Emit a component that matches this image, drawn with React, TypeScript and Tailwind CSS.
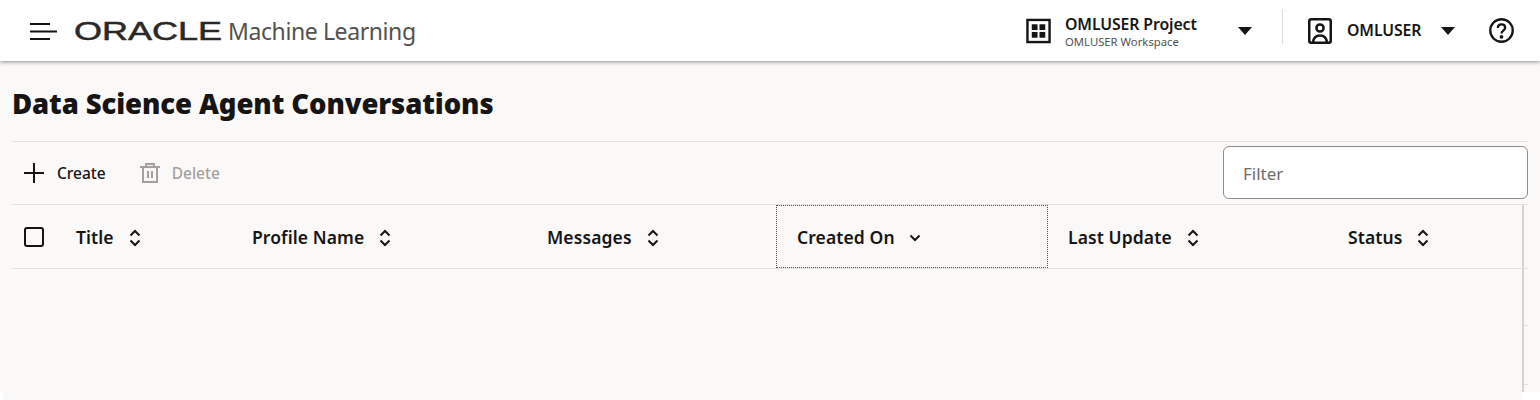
import React from 'react';

const font = { fontFamily: '"Noto Sans", "Open Sans", sans-serif' };

function SortIcon() {
  return (
    <svg width="14" height="18" viewBox="0 0 14 18" fill="none" stroke="#161513" strokeWidth="2" className="shrink-0">
      <path d="M2.5 6.5 7 2l4.5 4.5" />
      <path d="M2.5 11.5 7 16l4.5-4.5" />
    </svg>
  );
}

function DownIcon() {
  return (
    <svg width="12" height="8" viewBox="0 0 12 8" fill="none" stroke="#161513" strokeWidth="2" className="shrink-0">
      <path d="M1.5 1.5 6 6l4.5-4.5" />
    </svg>
  );
}

function Caret() {
  return (
    <svg width="16" height="10" viewBox="0 0 16 10" className="shrink-0">
      <path d="M1 1h14l-7 8z" fill="#161513" />
    </svg>
  );
}

function Header({ label, sorted, className }: { label: string; sorted?: boolean; className?: string }) {
  return (
    <div className={`flex items-center pl-5 pt-[2px] text-[17.5px] font-semibold text-[#161513] tracking-[0.1px] ${className ?? ''}`}>
      <span>{label}</span>
      <span className="ml-[14px]">{sorted ? <DownIcon /> : <SortIcon />}</span>
    </div>
  );
}

export default function App() {
  return (
    <div className="relative h-[400px] overflow-hidden bg-[#fbf9f8]" style={font}>
      {/* Top bar */}
      <div className="h-[61px] bg-white shadow-[0_1px_4px_rgba(0,0,0,0.45)] flex items-center pl-[30px] relative">
        <svg width="28" height="18" viewBox="0 0 28 18" fill="none" stroke="#161513" strokeWidth="2" className="shrink-0">
          <path d="M0 2h20M0 9.500h27M0 17h20" />
        </svg>
        <div className="w-[146px] ml-[16px] mt-[2px] shrink-0 text-[25px] leading-none font-normal text-[#2b2927] origin-left scale-x-[1.44] whitespace-nowrap [-webkit-text-stroke:0.5px_#2b2927]" style={{ fontFamily: '"Liberation Sans", sans-serif' }}>
          ORACLE
        </div>
        <div className="ml-2 mt-[2px] text-[23px] text-[#55514e] tracking-[-0.4px]">Machine Learning</div>
        <div className="ml-auto flex items-center">
          <svg width="25" height="26" viewBox="0 0 26 26" className="shrink-0">
            <rect x="1.500" y="1.500" width="23" height="23" fill="none" stroke="#161513" strokeWidth="2.500" />
            <rect x="6" y="6" width="6" height="6" fill="#161513" />
            <rect x="14" y="6" width="6" height="6" fill="#161513" />
            <rect x="6" y="14" width="6" height="6" fill="#161513" />
            <rect x="14" y="14" width="6" height="6" fill="#161513" />
          </svg>
          <div className="ml-[14px] w-[172px] leading-none mt-[3px]">
            <div className="text-[15.800px] font-semibold text-[#161513] tracking-[-0.1px]">OMLUSER Project</div>
            <div className="text-[11.300px] text-[#55514e] mt-[3px]">OMLUSER Workspace</div>
          </div>
          <Caret />
          <div className="w-px h-[35px] bg-[#dfdcd9] ml-[29px] mr-[25px] -mt-[9px]" />
          <svg width="24" height="26" viewBox="0 0 24 26" fill="none" stroke="#161513" strokeWidth="2.500" className="shrink-0">
            <rect x="1.250" y="1.250" width="21.500" height="23.500" rx="2" />
            <circle cx="12" cy="10" r="3.600" />
            <path d="M5 24.500c.5-4.500 3-7 7-7s6.500 2.500 7 7" />
          </svg>
          <div className="ml-[15px] mt-[1px] text-[15.800px] font-semibold text-[#161513] tracking-[-0.1px] w-[93px]">OMLUSER</div>
          <Caret />
          <svg width="25" height="25" viewBox="1 1 24 24" fill="none" stroke="#161513" strokeWidth="2.200" className="ml-[33px] mr-[26px] shrink-0">
            <circle cx="13" cy="13" r="10.800" />
            <path d="M9.500 10.500c0-2 1.500-3.300 3.500-3.300s3.500 1.300 3.500 3.200c0 2.800-3.500 2.700-3.500 5.400" />
            <circle cx="13" cy="19" r="0.700" fill="#161513" />
          </svg>
        </div>
      </div>

      {/* Page body */}
      <div className="mx-3">
        <div className="h-[81px] flex items-center border-b border-[#e3e0dd] pt-[6px]">
          <h1 className="text-[27.500px] font-black text-[#161513] tracking-[-0.1px]">Data Science Agent Conversations</h1>
        </div>

        {/* Toolbar */}
        <div className="h-[63px] flex items-center border-b border-[#e3e0dd] pl-3">
          <svg width="20" height="20" viewBox="0 0 20 20" stroke="#161513" strokeWidth="2" className="shrink-0">
            <path d="M10 0v20M0 10h20" />
          </svg>
          <span className="ml-[13px] pt-[2px] text-[15.500px] font-medium text-[#161513]">Create</span>
          <svg width="20" height="20" viewBox="0 0 20 20" fill="none" stroke="#a3a09d" strokeWidth="2" className="ml-[34px] shrink-0">
            <path d="M0 4h20M6 4V1h8v3M3 4v15h14V4M8 8v7M12 8v7" />
          </svg>
          <span className="ml-[12px] pt-[2px] text-[15.500px] font-medium text-[#a3a09d]">Delete</span>
          <div className="ml-auto w-[305px] h-[53px] -mt-[1px] rounded-md border border-[#8f8c89] bg-white flex items-center pl-[19px] pt-[2px] text-[17px] text-[#6f6c69]">
            Filter
          </div>
        </div>

        {/* Table head */}
        <div>
          <div className="grid grid-cols-[44px_176px_295px_249px_272px_280px_194px_6px] h-[64px] border-b border-[#e3e0dd]">
            <div className="flex items-center pl-3">
              <div className="w-5 h-5 rounded-[3px] border-2 border-[#161513] bg-[#fbf9f8]" />
            </div>
            <Header label="Title" />
            <Header label="Profile Name" />
            <Header label="Messages" />
            <Header label="Created On" sorted className="border border-dotted border-[#55514e]" />
            <Header label="Last Update" />
            <Header label="Status" />
            <div className="border-l-2 border-[#d6d4d1]" />
          </div>
          {/* Empty scroll area */}
          <div className="grid grid-cols-[1fr_6px] h-[123px]">
            <div />
            <div className="border-l-2 border-[#d6d4d1]">
              <div className="h-[57px] border-b border-[#e3e0dd]" />
              <div className="h-[59px] border-b border-[#e3e0dd]" />
            </div>
          </div>
        </div>
      </div>

      {/* white bits left at the bottom corners */}
      <div className="absolute left-0 bottom-0 w-[3px] h-[8px] bg-white" />
      <div className="absolute right-0 bottom-0 w-[18px] h-[8px] bg-white" />
    </div>
  );
}
